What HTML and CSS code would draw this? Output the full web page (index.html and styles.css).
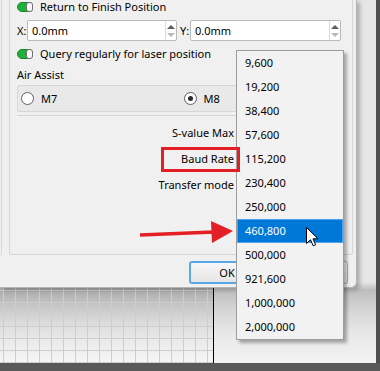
FILE: index.html
```html
<!DOCTYPE html>
<html lang="en">
<head>
    <meta charset="UTF-8">
    <meta name="viewport" content="width=device-width, initial-scale=1.0">
    <title>Device Settings</title>
    <link rel="stylesheet" href="styles.css">
</head>
<body>
    <div class="screen">
        <!-- the window behind the dialog -->
        <div class="desktop">
            <div class="desk-row">
                <div class="canvas"></div>
                <div class="side"></div>
                <div class="edge"></div>
            </div>
            <div class="taskbar"></div>
        </div>

        <div class="dialog">
            <div class="dlg-body">
                <div class="lframe"></div>
                <div class="panel">
                    <div class="row first"><span class="toggle"><span class="knob"></span></span>Return to Finish Position</div>
                    <div class="xy-row">
                        <span class="axis">X:</span>
                        <div class="spin">
                            <span class="val">0.0mm</span>
                            <span class="arrows"><i class="up"></i><i class="down"></i></span>
                        </div>
                        <span class="axis">Y:</span>
                        <div class="spin">
                            <span class="val">0.0mm</span>
                            <span class="arrows"><i class="up"></i><i class="down"></i></span>
                        </div>
                    </div>
                    <div class="row query"><span class="toggle"><span class="knob"></span></span>Query regularly for laser position</div>
                    <div class="row air">Air Assist</div>
                    <div class="radios">
                        <label class="radio"><span class="circle"></span>M7</label>
                        <label class="radio"><span class="circle checked"></span>M8</label>
                    </div>
                    <div class="form">
                        <div class="frow"><span class="flabel">S-value Max</span></div>
                        <div class="frow"><span class="flabel">Baud Rate</span></div>
                        <div class="frow"><span class="flabel">Transfer mode</span></div>
                    </div>
                </div>
            </div>
            <div class="buttons">
                <button class="btn default">OK</button>
                <button class="btn">Cancel</button>
            </div>
        </div>

        <ul class="popup">
            <li>9,600</li>
            <li>19,200</li>
            <li>38,400</li>
            <li>57,600</li>
            <li>115,200</li>
            <li>230,400</li>
            <li>250,000</li>
            <li class="active">460,800</li>
            <li>500,000</li>
            <li>921,600</li>
            <li>1,000,000</li>
            <li>2,000,000</li>
        </ul>

        <!-- annotations -->
        <div class="mark"></div>
        <svg class="arrow" width="100" height="30" viewBox="0 0 100 30">
            <line x1="0" y1="16" x2="74" y2="13" stroke="#e31e24" stroke-width="3.5"/>
            <polygon points="71,2 93,12 72,24" fill="#e31e24"/>
        </svg>
        <svg class="cursor" width="13" height="20" viewBox="0 0 13 20">
            <path d="M0.5 0.5 L0.5 16.5 L4.5 12.8 L7.2 18.8 L9.6 17.8 L7 11.8 L12 11.8 Z" fill="#fff" stroke="#000" stroke-width="1" stroke-linejoin="round"/>
        </svg>
    </div>
</body>
</html>
```

FILE: styles.css
```css
* {
    box-sizing: border-box;
}
body {
    margin: 0;
    font-family: 'Noto Sans', 'Liberation Sans', sans-serif;
    font-size: 11px;
    color: #000;
}
.screen {
    position: relative;
    width: 380px;
    height: 371px;
    overflow: hidden;
}

/* background window */
.desktop {
    display: flex;
    flex-direction: column;
    height: 100%;
}
.desk-row {
    display: flex;
    flex: 1;
}
.canvas {
    width: 214px;
    border-right: 1px solid #000;
    background-color: #f3f3f3;
    background-image:
        linear-gradient(to right, #cdcdcd 1px, transparent 1px),
        linear-gradient(to bottom, #cdcdcd 1px, transparent 1px),
        linear-gradient(to bottom, #a6a6a6 286px, #b0b0b0 292px, #c6c6c6 305px, #dbdbdb 322px, #eaeaea 340px, #f4f4f4 358px);
    background-size: 12px 12px, 12px 12px, 100% 100%;
    background-position: 3px 0, 0 2px, 0 0;
}
.side {
    flex: 1;
    background: linear-gradient(to bottom, #e6e6e6 0, #e6e6e6 282px, #bdbdbd 290px, #d6d6d6 310px, #e9e9e9 335px, #f1f1f1 360px);
}
.edge {
    width: 4px;
    background: #4e4e4e;
}
.taskbar {
    height: 8px;
    background: #595959;
}

/* dialog */
.dialog {
    position: absolute;
    left: 0;
    top: 0;
    width: 357px;
    height: 288px;
    background: #f0f0f0;
    border-right: 1px solid #b4b4b4;
    border-bottom: 1px solid #b4b4b4;
    border-bottom-right-radius: 6px;
    box-shadow: 3px 2px 4px rgba(0, 0, 0, 0.25);
}
.dlg-body {
    display: flex;
    height: 255px;
}
.lframe {
    width: 2px;
    border-right: 1px solid #d6d6d6;
    border-bottom: 1px solid #d6d6d6;
    border-bottom-right-radius: 2px;
}
.panel {
    margin-left: 7px;
    width: 344px;
    border: 1px solid #d6d6d6;
    border-top: none;
    border-radius: 0 0 3px 3px;
    padding: 0 8px 0 7px;
}
.row {
    display: flex;
    align-items: center;
    height: 14px;
    line-height: 14px;
    white-space: nowrap;
}
.row.first {
    height: 15px;
    margin-top: -1px;
}
.toggle {
    display: inline-flex;
    width: 16px;
    height: 10px;
    margin-right: 7px;
    background: #1db33a;
    border: 1px solid #13842a;
    border-radius: 5px 4px 4px 5px;
    justify-content: flex-end;
}
.knob {
    width: 7px;
    height: 10px;
    margin: -1px -1px 0 0;
    background: #fbfbfb;
    border: 1px solid #6f6f6f;
    border-radius: 3px;
}
.xy-row {
    display: flex;
    align-items: center;
    margin-top: 6px;
    height: 21px;
}
.axis {
    width: 10px;
}
.xy-row .axis + .spin {
    margin-right: 3px;
}
.spin {
    display: flex;
    width: 151px;
    height: 21px;
    background: #fff;
    border: 1px solid #b9b9b9;
    border-radius: 2px;
}
.spin:last-child {
    width: 152px;
    margin-right: 0;
}
.val {
    flex: 1;
    padding-left: 4px;
    line-height: 19px;
}
.arrows {
    display: flex;
    flex-direction: column;
    justify-content: center;
    align-items: center;
    gap: 4px;
    width: 11px;
    border-left: 1px solid #dadada;
}
.arrows i {
    width: 0;
    height: 0;
    border-left: 4px solid transparent;
    border-right: 4px solid transparent;
}
.arrows .up {
    border-bottom: 4px solid #5d5d5d;
}
.arrows .down {
    border-top: 4px solid #b8b8b8;
}
.query {
    margin-top: 6px;
}
.air {
    margin-top: 7px;
}
.radios {
    display: grid;
    grid-template-columns: 1fr 1fr;
    margin-top: 3px;
    height: 27px;
    background: #e9e9e9;
    border: 1px solid #d6d6d6;
    border-radius: 2px;
}
.radio {
    display: flex;
    align-items: center;
    padding-left: 3px;
}
.circle {
    display: inline-flex;
    justify-content: center;
    align-items: center;
    width: 13px;
    height: 13px;
    margin-right: 7px;
    background: #fff;
    border: 1px solid #5f5f5f;
    border-radius: 50%;
}
.circle.checked::after {
    content: "";
    width: 5px;
    height: 5px;
    border-radius: 50%;
    background: #2a2a2a;
}
.form {
    margin-top: 3px;
    padding-top: 3px;
    border-top: 1px solid #d6d6d6;
}
.frow {
    display: flex;
    height: 26px;
    align-items: center;
}
.flabel {
    width: 217px;
    text-align: right;
}
.buttons {
    display: flex;
    justify-content: flex-end;
    gap: 7px;
    margin-top: 6px;
    padding-right: 8px;
}
.btn {
    width: 76px;
    height: 23px;
    font-family: inherit;
    font-size: 11px;
    background: linear-gradient(#f6f6f6, #e6e6e6);
    border: 1px solid #adadad;
    border-radius: 3px;
}
.btn.default {
    border: 2px solid #5aa7e6;
}

/* open combo list */
.popup {
    position: absolute;
    left: 236px;
    top: 50px;
    width: 108px;
    height: 290px;
    margin: 0;
    padding: 0;
    list-style: none;
    background: #f2f2f2;
    border: 1px solid #9c9c9c;
    box-shadow: 3px 3px 3px rgba(0, 0, 0, 0.3);
}
.popup li {
    height: 24px;
    line-height: 24px;
    padding-left: 8px;
}
.popup li.active {
    background: #0078d7;
    color: #fff;
    box-shadow: inset 0 0 0 1px #4ea3ea;
}

.mark {
    position: absolute;
    left: 161px;
    top: 147px;
    width: 79px;
    height: 25px;
    border: 3px solid #e31e24;
}
.arrow {
    position: absolute;
    left: 140px;
    top: 219px;
}
.cursor {
    position: absolute;
    left: 306px;
    top: 227px;
}
```
